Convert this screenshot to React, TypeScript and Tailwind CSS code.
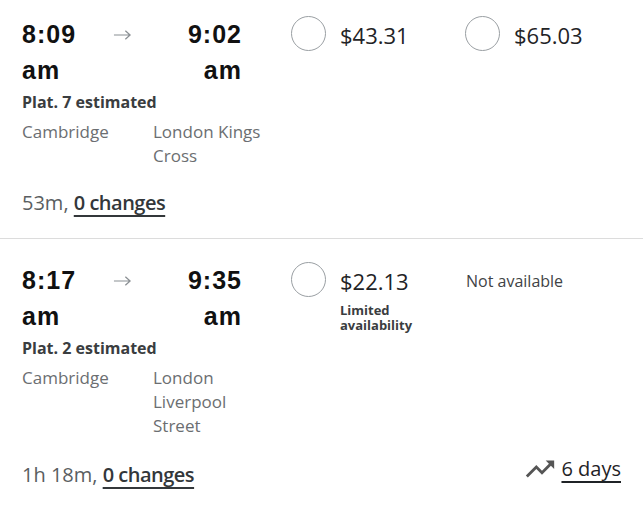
const body = { fontFamily: '"Open Sans", "Noto Sans", sans-serif' };
const timeFont = { fontFamily: '"Liberation Sans", Arial, sans-serif' };

type Journey = {
  dep: string;
  arr: string;
  plat: string;
  from: string;
  to: string;
  duration: string;
  first: { price: string; note?: string };
  second?: string;
  trend?: string;
  pt: string;
  footMt: string;
};

const journeys: Journey[] = [
  {
    dep: "8:09",
    arr: "9:02",
    plat: "Plat. 7 estimated",
    from: "Cambridge",
    to: "London Kings Cross",
    duration: "53m,",
    first: { price: "$43.31" },
    second: "$65.03",
    pt: "pt-4",
    footMt: "mt-[21px]",
  },
  {
    dep: "8:17",
    arr: "9:35",
    plat: "Plat. 2 estimated",
    from: "Cambridge",
    to: "London Liverpool Street",
    duration: "1h 18m,",
    first: { price: "$22.13", note: "Limited availability" },
    trend: "6 days",
    pt: "pt-[23px]",
    footMt: "mt-[23px]",
  },
];

function Radio() {
  return <div className="w-[35px] h-[35px] shrink-0 rounded-full border border-[#9a9fa3] bg-white" />;
}

function TrendIcon() {
  return (
    <svg viewBox="0 0 24 24" className="w-[34px] h-[34px] text-[#555]" fill="currentColor">
      <path d="M16 6l2.29 2.29-4.88 4.88-4-4L2 16.59 3.41 18l6-6 4 4 6.3-6.29L22 12V6z" />
    </svg>
  );
}

function JourneyRow({ j, last }: { j: Journey; last?: boolean }) {
  return (
    <div className={`px-[22px] ${j.pt} ${last ? "" : "pb-[21px] border-b border-[#dcdcdc]"}`}>
      <div className="flex items-start">
        {/* times, platform, stations */}
        <div className="w-[220px] shrink-0">
          <div className="flex text-[25px] leading-[36px] font-bold tracking-[0.04em] text-[#111]" style={timeFont}>
            <div className="w-[91px]">
              {j.dep}
              <br />
              am
            </div>
            <div className="w-[40px] text-[#8a8f93]">
              <svg viewBox="0 0 20 12" className="w-[19px] h-[12px] mt-[13px]" fill="none" stroke="currentColor" strokeWidth="1.3">
                <path d="M1 6h17M13 1.5L18 6l-5 4.5" />
              </svg>
            </div>
            <div className="flex-1 text-right">
              {j.arr}
              <br />
              am
            </div>
          </div>
          <div className="mt-[2px] text-[16px] leading-6 font-bold text-[#3a3d40]" style={body}>
            {j.plat}
          </div>
          <div className="mt-[6px] flex text-[17px] leading-6 text-[#6b6e71]" style={body}>
            <div className="w-[131px] shrink-0">{j.from}</div>
            <div className="w-[120px] shrink-0">{j.to}</div>
          </div>
        </div>

        {/* fares */}
        <div className="ml-[49px] w-[174px] shrink-0 flex items-start gap-[14px]">
          <Radio />
          <div style={body}>
            <div className="mt-1 text-[22px] leading-[30px] text-[#1f2326]">{j.first.price}</div>
            {j.first.note && (
              <div className="mt-[7px] w-[80px] text-[13px] leading-[15px] font-bold text-[#3a3d40]">
                {j.first.note}
              </div>
            )}
          </div>
        </div>
        <div className="flex items-start gap-[14px]" style={body}>
          {j.second ? (
            <>
              <Radio />
              <div className="mt-1 text-[22px] leading-[30px] text-[#1f2326]">{j.second}</div>
            </>
          ) : (
            <div className="ml-px mt-1 text-[16px] leading-[30px] text-[#3f4346]">Not available</div>
          )}
        </div>
      </div>

      <div className={`${j.footMt} flex items-start justify-between`} style={body}>
        <div className="text-[20px] leading-[28px] text-[#5a5e61]">
          {j.duration}{" "}
          <span className="font-semibold tracking-[-0.5px] text-[#33373a] underline decoration-2 underline-offset-[5px]">
            0 changes
          </span>
        </div>
        {j.trend && (
          <div className="-mt-[9px] flex items-center gap-[4px]">
            <TrendIcon />
            <span className="text-[20px] leading-[28px] text-[#1f2326] underline decoration-2 underline-offset-[5px]">
              {j.trend}
            </span>
          </div>
        )}
      </div>
    </div>
  );
}

export default function App() {
  return (
    <div className="w-[643px] h-[511px] overflow-hidden bg-white">
      {journeys.map((j, i) => (
        <JourneyRow key={j.dep} j={j} last={i === journeys.length - 1} />
      ))}
    </div>
  );
}
